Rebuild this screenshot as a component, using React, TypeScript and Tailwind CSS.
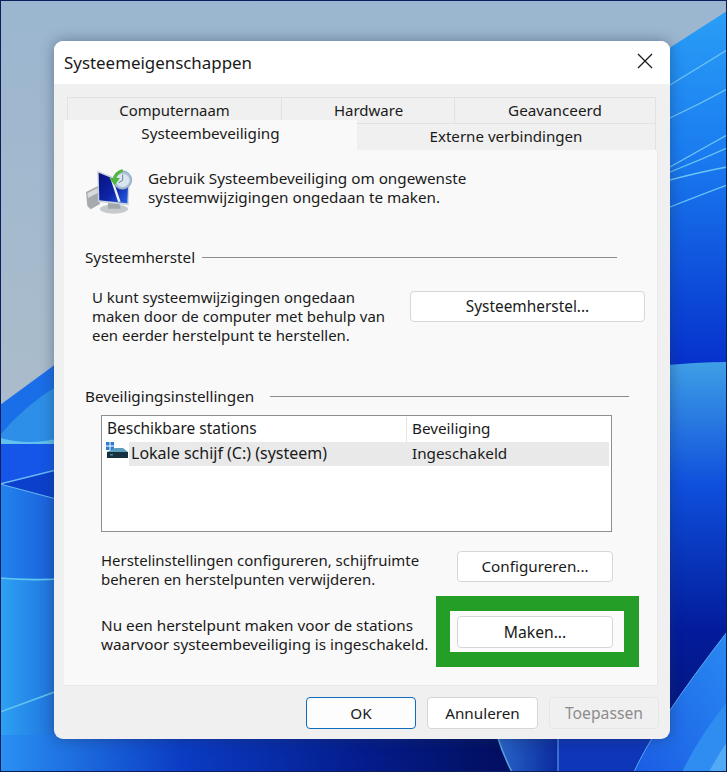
function Btn({ label, cls = "" }: { label: string; cls?: string }) {
  return (
    <div className={`flex items-center justify-center rounded-[4px] border shrink-0 ${cls}`}>
      {label}
    </div>
  );
}

function Wallpaper() {
  return (
    <svg className="absolute inset-0" width="727" height="772" viewBox="0 0 727 772">
      <defs>
        <linearGradient id="sky" x1="0" y1="0" x2="0" y2="1">
          <stop offset="0" stopColor="#9bb6d0" />
          <stop offset="0.5" stopColor="#aabccb" />
          <stop offset="1" stopColor="#bcc7ce" />
        </linearGradient>
        <linearGradient id="rTop" x1="0" y1="0" x2="0" y2="1">
          <stop offset="0" stopColor="#2a9ef6" />
          <stop offset="0.4" stopColor="#1a7cf0" />
          <stop offset="1" stopColor="#0630cc" />
        </linearGradient>
        <linearGradient id="rLow" x1="0" y1="0" x2="0" y2="1">
          <stop offset="0" stopColor="#3f9fe6" />
          <stop offset="0.3" stopColor="#0f4fdc" />
          <stop offset="0.65" stopColor="#031c9c" />
          <stop offset="1" stopColor="#02126e" />
        </linearGradient>
        <linearGradient id="bottom" x1="0" y1="0" x2="1" y2="0">
          <stop offset="0" stopColor="#2a90f2" />
          <stop offset="0.25" stopColor="#0b3cc4" />
          <stop offset="0.5" stopColor="#041c8c" />
          <stop offset="0.68" stopColor="#020f62" />
          <stop offset="1" stopColor="#020f62" />
        </linearGradient>
        <linearGradient id="lMid" x1="0" y1="0" x2="1" y2="0">
          <stop offset="0" stopColor="#2184ee" />
          <stop offset="1" stopColor="#1a5cd8" />
        </linearGradient>
        <linearGradient id="lLow" x1="0" y1="0" x2="1" y2="0">
          <stop offset="0" stopColor="#2ea2f4" />
          <stop offset="1" stopColor="#1e6fdc" />
        </linearGradient>
        <linearGradient id="swoosh" x1="0" y1="1" x2="1" y2="0">
          <stop offset="0" stopColor="#1a5ce4" />
          <stop offset="1" stopColor="#2a8af2" />
        </linearGradient>
        <linearGradient id="arc" x1="0" y1="0" x2="1" y2="0">
          <stop offset="0" stopColor="#2a66c8" />
          <stop offset="1" stopColor="#0a2a9e" />
        </linearGradient>
        <linearGradient id="screen" x1="0" y1="0" x2="1" y2="1">
          <stop offset="0" stopColor="#08127c" />
          <stop offset="0.55" stopColor="#0c24a8" />
          <stop offset="1" stopColor="#2a62e4" />
        </linearGradient>
      </defs>
      <rect width="727" height="772" fill="url(#sky)" />
      {/* left side */}
      <path d="M0 405 L60 361 V772 H0 Z" fill="#1a6ee8" />
      <path d="M0 435 Q25 405 60 384 V445 H0 Z" fill="#2e8fe8" />
      <path d="M0 438 Q30 446 60 438 V455 H0 Z" fill="#62c2ee" />
      <path d="M0 444 H60 V474 L0 484 Z" fill="#1556e8" />
      <path d="M0 484 L60 469 V500 Z" fill="#0b40cc" />
      <path d="M0 484 L60 500 V580 H0 Z" fill="url(#lMid)" />
      <path d="M0 578 H60 V772 H0 Z" fill="url(#lLow)" />
      <path d="M0 578 Q30 581 60 579" stroke="#63c6ee" strokeWidth="1.5" fill="none" />
      <path d="M0 712 L60 690" stroke="#63c6ee" strokeWidth="1.5" fill="none" />
      <path d="M0 484 L60 469" stroke="#6ab8f0" strokeWidth="1.5" fill="none" />
      <path d="M0 484 L60 500" stroke="#6ab8f0" strokeWidth="1" fill="none" />
      {/* right side */}
      <path d="M660 54 L727 11 V366 H660 Z" fill="url(#rTop)" />
      <path d="M660 366 Q695 362 727 362 V772 H660 Z" fill="url(#rLow)" />
      <g stroke="#6cc6f4" fill="none" strokeWidth="1.3">
        <path d="M670 85 L727 50" />
        <path d="M670 118 Q700 104 727 89" />
        <path d="M670 167 Q700 150 727 135" />
        <path d="M670 172 Q700 160 727 148" />
        <path d="M670 180 Q700 172 727 167" />
        <path d="M670 207 Q700 195 727 185" />
      </g>
      {/* bottom */}
      <rect x="0" y="735" width="727" height="37" fill="url(#bottom)" />
      <path d="M497 735 Q503 755 512 772 H558 V735 Z" fill="url(#arc)" />
      <path d="M558 735 V772 H640 L660 735 Z" fill="#0e36b8" />
      <path d="M497 735 Q503 755 512 772" stroke="#5aa2dc" strokeWidth="1.5" fill="none" />
      <path d="M558 735 V772" stroke="#4a86d4" strokeWidth="1.5" fill="none" />
      <path d="M634 772 Q655 725 727 632 V772 Z" fill="url(#swoosh)" />
      <path d="M634 772 Q655 725 727 632" stroke="#5aa8f0" strokeWidth="1" fill="none" />
      <path d="M682 772 Q700 735 727 702 V772 Z" fill="#2f8df2" />
      <path d="M709 772 Q718 755 727 742 V772 Z" fill="#52aaf5" />
      <rect x="0.5" y="0.5" width="726" height="771" fill="none" stroke="#0c1e5c" strokeWidth="1" />
    </svg>
  );
}

function RestoreIcon() {
  return (
    <svg width="47" height="46" viewBox="18 24 141 138" className="shrink-0">
      <path d="M18 96 L54 78 L60 132 L32 148 L22 138 Z" fill="#a6aaae" />
      <path d="M22 100 L52 84 L54 98 L24 114 Z" fill="#d8dadc" />
      <ellipse cx="102" cy="147" rx="42" ry="14" fill="#c6cacd" />
      <path d="M84 122 L118 128 L122 146 L84 146 Z" fill="#a2a7ab" />
      <path d="M52 32 L148 70 L146 136 L54 126 Z" fill="#c8d2de" />
      <path d="M56 38 L144 74 L142 130 L58 121 Z" fill="url(#screen)" />
      <path d="M90 52 L98 56 L122 126 L114 125 Z" fill="#eef3f8" />
      <circle cx="127" cy="60" r="28" fill="#a9bfd6" stroke="#7a94ae" strokeWidth="2" />
      <circle cx="128" cy="61" r="20" fill="#dbe5ee" />
      <path d="M128 44 V61 L116 68" stroke="#56708c" strokeWidth="2.5" fill="none" />
      <path d="M104 58 Q106 38 128 31" stroke="#4fb83c" strokeWidth="9" fill="none" />
      <path d="M88 54 L120 54 L104 76 Z" fill="#4fb83c" />
    </svg>
  );
}

function DriveIcon() {
  return (
    <svg width="22" height="18" viewBox="0 0 22 18" className="shrink-0">
      <rect x="0" y="0" width="3.5" height="3.5" fill="#2b7fd0" />
      <rect x="4.5" y="0" width="3.5" height="3.5" fill="#2b7fd0" />
      <rect x="0" y="4.5" width="3.5" height="3.5" fill="#2b7fd0" />
      <rect x="4.5" y="4.5" width="3.5" height="3.5" fill="#2b7fd0" />
      <path d="M9 6 L17 6 L22 10 L1 10 Z" fill="#5c9cbc" />
      <rect x="1" y="10" width="21" height="6" fill="#16303f" />
      <rect x="4" y="12" width="3" height="1.5" fill="#4a8a9a" />
    </svg>
  );
}

export default function App() {
  const tab = "flex items-center justify-center text-[#1a1a1a] border-[#e2e2e2]";
  const btn = "bg-white border-[#d6d6d6] text-[#1a1a1a]";
  return (
    <div className="relative w-[727px] h-[772px] overflow-hidden font-['Noto_Sans','Open_Sans',sans-serif] leading-[19px] text-[15.25px] text-[#1a1a1a]">
      <Wallpaper />
      <div className="absolute left-[54px] top-[41px] w-[616px] h-[698px] rounded-[9px] bg-[#f0f0f0] overflow-hidden flex flex-col shadow-[0_0_14px_rgba(30,50,80,0.45)]">
        {/* title bar */}
        <div className="h-[43px] bg-white flex items-center justify-between pl-[10px] pr-[17px] shrink-0">
          <span className="text-[16.9px]">Systeemeigenschappen</span>
          <svg width="16" height="16" viewBox="0 0 16 16" className="-mt-[3px]">
            <path d="M1 1 L15 15 M15 1 L1 15" stroke="#1a1a1a" strokeWidth="1.3" fill="none" />
          </svg>
        </div>

        {/* tabs */}
        <div className="pt-[13px] shrink-0">
          <div className="ml-[13px] w-[589px] h-[26px] flex">
            <div className={`${tab} w-[215px] border-t border-l border-r pb-[1px] text-[14.9px]`}>Computernaam</div>
            <div className={`${tab} w-[173px] border-t border-r pb-[1px] text-[15px] pl-[1px]`}>Hardware</div>
            <div className={`${tab} w-[201px] border-t border-r pb-[1px]`}>Geavanceerd</div>
          </div>
          <div className="ml-[10px] w-[594px] -mt-[3px] h-[30px] flex items-end">
            <div className="w-[293px] h-[30px] bg-[#f9f9f9] flex items-center justify-center pb-[4px] relative">Systeembeveiliging</div>
            <div className={`${tab} w-[299px] h-[27px] border-t border-r bg-[#f0f0f0] pb-[2px] text-[15.1px]`}>Externe verbindingen</div>
          </div>
        </div>

        {/* panel */}
        <div className="ml-[10px] w-[594px] h-[536px] bg-[#f9f9f9] border-r border-b border-[#e8e8e8] shrink-0 flex flex-col">
          <div className="flex pt-[18px] pl-[22px]">
            <RestoreIcon />
            <p className="ml-[15px] mt-[1px]">
              Gebruik Systeembeveiliging om ongewenste
              <br />
              systeemwijzigingen ongedaan te maken.
            </p>
          </div>

          <div className="mt-[34px] ml-[21px] w-[532px] flex items-center">
            <span className="w-[117px] shrink-0">Systeemherstel</span>
            <div className="flex-1 h-px bg-[#8c8c8c]" />
          </div>

          <div className="mt-[21px] ml-[28px] flex items-start">
            <p className="w-[318px] shrink-0 text-[14.95px] whitespace-nowrap">
              U kunt systeemwijzigingen ongedaan
              <br />
              maken door de computer met behulp van
              <br />
              een eerder herstelpunt te herstellen.
            </p>
            <Btn label="Systeemherstel..." cls={`${btn} w-[235px] h-[31px] mt-[3px] text-[15.4px]`} />
          </div>

          <div className="mt-[42px] ml-[21px] w-[544px] flex items-center">
            <span className="w-[185px] shrink-0">Beveiligingsinstellingen</span>
            <div className="flex-1 h-px bg-[#8c8c8c]" />
          </div>

          <div className="mt-[9px] ml-[37px] w-[511px] h-[117px] border-[1.5px] border-[#8f8f8f] bg-white pt-[1px] pr-[2px] flex flex-col">
            <div className="flex h-[25px] items-center">
              <div className="w-[305px] pl-[5px] pb-[2px] border-r border-[#e4e4e4] h-full flex items-center text-[15.45px]">Beschikbare stations</div>
              <div className="pl-[5px] pb-[2px]">Beveiliging</div>
            </div>
            <div className="flex">
              <div className="w-[27px] pl-[4px] shrink-0">
                <DriveIcon />
              </div>
              <div className="flex-1 h-[24px] bg-[#e9e9e9] flex items-center pl-[2px] pb-[2px]">
                <span className="w-[281px] text-[16px]">Lokale schijf (C:) (systeem)</span>
                <span>Ingeschakeld</span>
              </div>
            </div>
          </div>

          <div className="mt-[19px] ml-[37px] flex items-start h-[38px]">
            <p className="w-[356px] shrink-0 text-[14.95px] whitespace-nowrap">
              Herstelinstellingen configureren, schijfruimte
              <br />
              beheren en herstelpunten verwijderen.
            </p>
            <Btn label="Configureren..." cls={`${btn} w-[156px] h-[31px]`} />
          </div>

          <div className="mt-[7px] ml-[37px] flex items-start">
            <p className="w-[335px] shrink-0 mt-[20px] whitespace-nowrap text-[15.3px]">
              Nu een herstelpunt maken voor de stations
              <br />
              waarvoor systeembeveiliging is ingeschakeld.
            </p>
            <div className="w-[203px] h-[71px] bg-[#259e27] pl-[14px] pr-[15px] py-[15px] shrink-0">
              <div className="w-full h-full bg-[#fbfbfb] pl-[7px] pt-[5px]">
                <Btn label="Maken..." cls={`${btn} w-[156px] h-[32px] text-[15.7px]`} />
              </div>
            </div>
          </div>
        </div>

        {/* footer */}
        <div className="flex-1 flex justify-end gap-[11px] pt-[11px] pr-[11px]">
          <Btn label="OK" cls="w-[110px] h-[32px] bg-[#fdfdfd] border-[#0f6cbd]" />
          <Btn label="Annuleren" cls={`${btn} w-[111px] h-[32px]`} />
          <Btn label="Toepassen" cls="w-[110px] h-[32px] bg-[#f0f0f0] border-[#e6e6e6] text-[15.7px] text-[#8c8c8c]" />
        </div>
      </div>
    </div>
  );
}
